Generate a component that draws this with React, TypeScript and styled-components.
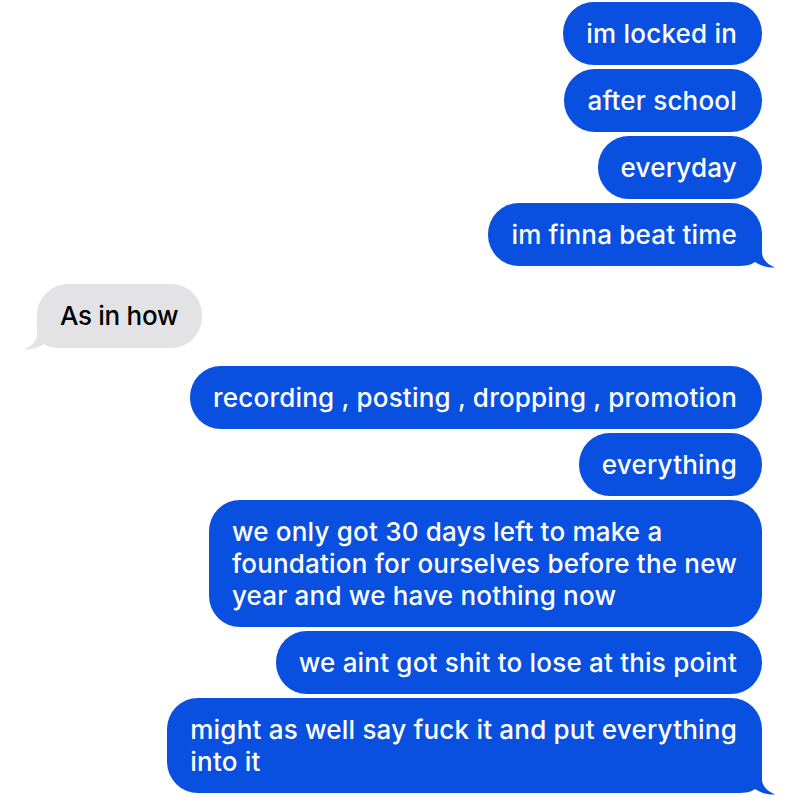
import styled, { createGlobalStyle } from "styled-components";

const BLUE = "#0a50e0";
const GRAY = "#e3e3e6";

type Side = "me" | "them";

const messages: { from: Side; lines: string[]; tail?: boolean; gapBefore?: boolean }[] = [
  { from: "me", lines: ["im locked in"] },
  { from: "me", lines: ["after school"] },
  { from: "me", lines: ["everyday"] },
  { from: "me", lines: ["im finna beat time"], tail: true },
  { from: "them", lines: ["As in how"], tail: true, gapBefore: true },
  { from: "me", lines: ["recording , posting , dropping , promotion"], gapBefore: true },
  { from: "me", lines: ["everything"] },
  {
    from: "me",
    lines: [
      "we only got 30 days left to make a",
      "foundation for ourselves before the new",
      "year and we have nothing now",
    ],
  },
  { from: "me", lines: ["we aint got shit to lose at this point"] },
  {
    from: "me",
    lines: ["might as well say fuck it and put everything", "into it"],
    tail: true,
  },
];

export default function App() {
  return (
    <>
      <GlobalStyle />
      <Thread>
        {messages.map((m, i) => (
          <Row key={i} $from={m.from} $gap={m.gapBefore}>
            <Bubble $from={m.from}>
              {m.tail && (
                <Tail $from={m.from} width="46" height="36" viewBox="0 0 46 36">
                  <path d="M0 34 V0 H32 V20 C32 27 37 32 45 35.5 C39 36 32 34.5 25 30 C21 33 15 34 9 34 Z" />
                </Tail>
              )}
              <Text>
                {m.lines.map((line, j) => (
                  <span key={j}>
                    {j > 0 && <br />}
                    {line}
                  </span>
                ))}
              </Text>
            </Bubble>
          </Row>
        ))}
      </Thread>
    </>
  );
}

const GlobalStyle = createGlobalStyle`
  html, body {
    margin: 0;
    background: #ffffff;
  }
  body {
    font-family: Inter, "Noto Sans", "Liberation Sans", sans-serif;
    -webkit-font-smoothing: antialiased;
  }
`;

const Thread = styled.div`
  width: 800px;
  height: 800px;
  box-sizing: border-box;
  padding: 2px 38px 0 37px;
  display: flex;
  flex-direction: column;
  gap: 4px;
  overflow: hidden;
`;

const Row = styled.div<{ $from: Side; $gap?: boolean }>`
  display: flex;
  justify-content: ${(p) => (p.$from === "me" ? "flex-end" : "flex-start")};
  margin-top: ${(p) => (p.$gap ? "14px" : "0")};
`;

const Bubble = styled.div<{ $from: Side }>`
  position: relative;
  box-sizing: border-box;
  padding: ${(p) => (p.$from === "me" ? "15.5px 25px 15.5px 23px" : "16px 24px 16px 23px")};
  border-radius: 31px;
  background: ${(p) => (p.$from === "me" ? BLUE : GRAY)};
  color: ${(p) => (p.$from === "me" ? "#ffffff" : "#000000")};
  font-size: 26px;
  line-height: 32px;
  font-weight: 500;
  letter-spacing: ${(p) => (p.$from === "me" ? "0.2px" : "-0.3px")};
  white-space: nowrap;
`;

const Text = styled.span`
  position: relative;
  z-index: 1;
`;

const Tail = styled.svg<{ $from: Side }>`
  position: absolute;
  z-index: 0;
  bottom: -2px;
  ${(p) => (p.$from === "me" ? "right: -14px;" : "left: -14px; transform: scaleX(-1);")}
  fill: ${(p) => (p.$from === "me" ? BLUE : GRAY)};
`;
